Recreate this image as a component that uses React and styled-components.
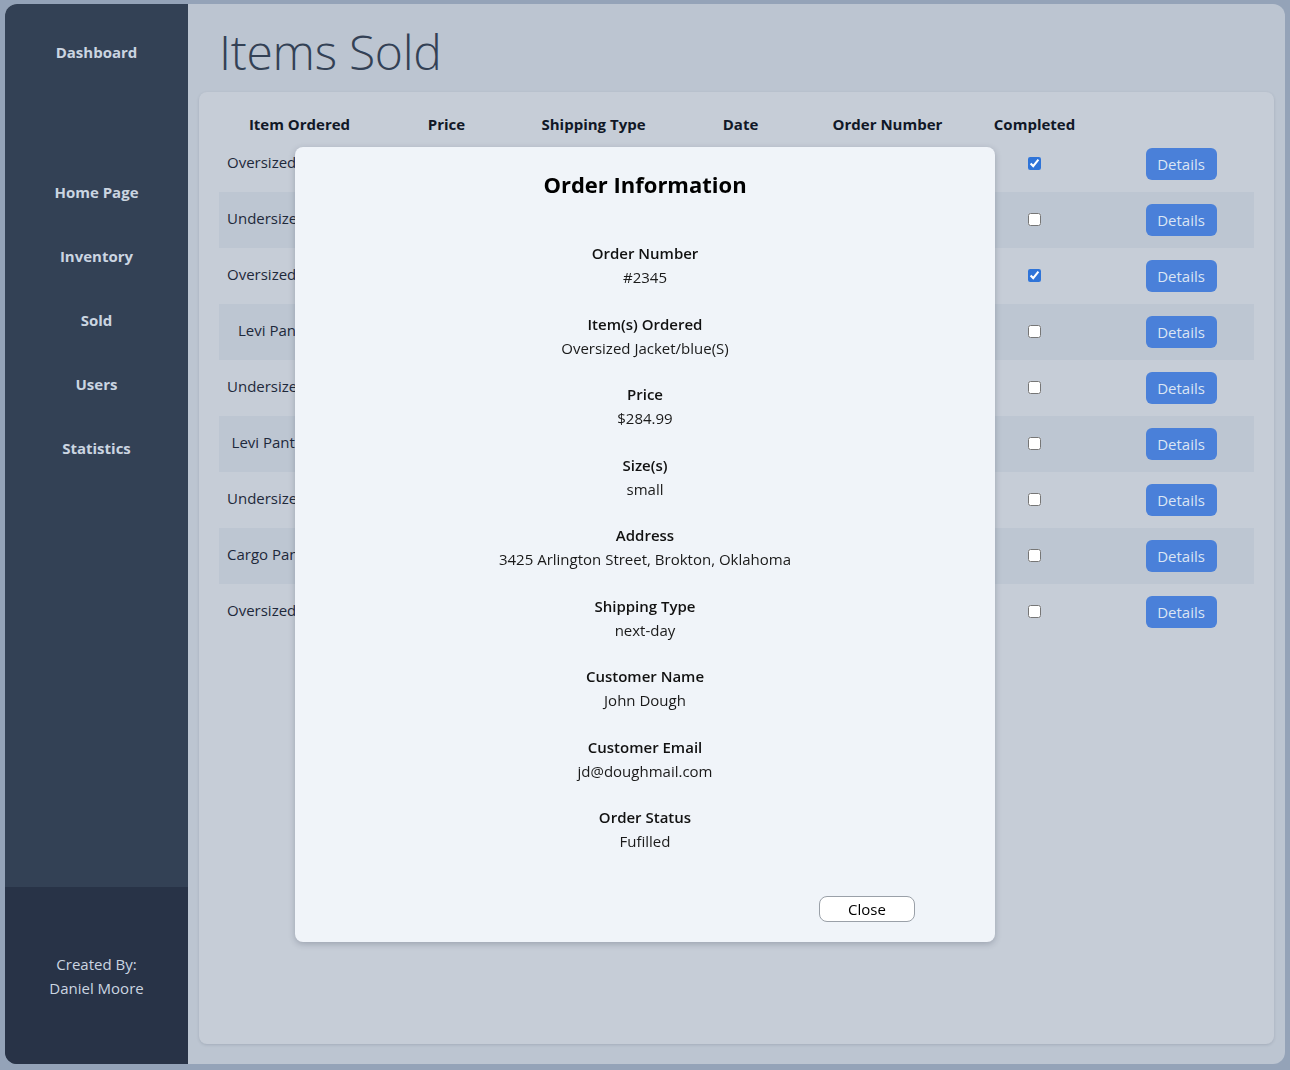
import React from "react";
import styled, { createGlobalStyle } from "styled-components";

const Global = createGlobalStyle`
  html, body { margin: 0; padding: 0; }
  body {
    background: #94a3b8;
    font-family: "Open Sans", "Noto Sans", sans-serif;
  }
  * { box-sizing: border-box; }
`;

const Shell = styled.div`
  margin: 4px 5px 6px 5px;
  height: 1060px;
  display: flex;
  border-radius: 12px;
  overflow: hidden;
  background: #bcc5d1;
`;

const Sidebar = styled.aside`
  width: 183px;
  display: flex;
  flex-direction: column;
  background: #334155;
  color: #cbd5e1;
`;

const Brand = styled.div`
  font-weight: 700;
  font-size: 15px;
  text-align: center;
  padding-top: 38px;
  height: 177px;
`;

const Nav = styled.nav`
  flex: 1;
  display: flex;
  flex-direction: column;
  gap: 42px;
`;

const NavItem = styled.a`
  font-weight: 700;
  font-size: 15px;
  text-align: center;
  line-height: 22px;
  color: #cbd5e1;
`;

const Footer = styled.div`
  height: 177px;
  background: #283347;
  display: flex;
  flex-direction: column;
  align-items: center;
  justify-content: center;
  font-size: 15px;
  line-height: 24px;
  color: #cbd5e1;
`;

const Main = styled.main`
  flex: 1;
  display: flex;
  flex-direction: column;
  padding: 0 11px 20px 11px;
`;

const Title = styled.h1`
  margin: 0;
  height: 88px;
  padding: 16px 0 0 20px;
  font-size: 48px;
  font-weight: 300;
  line-height: 64px;
  color: #334155;
  letter-spacing: -0.3px;
`;

const Card = styled.section`
  flex: 1;
  background: #c6cdd7;
  border-radius: 8px;
  padding: 20px 20px;
  box-shadow: 0 1px 3px rgba(30, 41, 59, 0.15);
`;

const Table = styled.table`
  width: 100%;
  border-collapse: collapse;
  table-layout: fixed;
  color: #1e293b;
  font-size: 15px;
`;

const Th = styled.th`
  width: ${(p) => p.$w || "auto"};
  height: 24px;
  padding: 0 0 0 ${(p) => p.$pl || "0px"};
  font-weight: 700;
  font-size: 15px;
  text-align: center;
  color: #111827;
`;

const Tr = styled.tr`
  height: 56px;
  background: ${(p) => (p.$striped ? "#bdc6d2" : "transparent")};
`;

const Td = styled.td`
  text-align: center;
  vertical-align: middle;
  padding: 0 8px ${(p) => (p.$raised ? "5px" : "0")} 8px;
  white-space: nowrap;
  overflow: hidden;
`;

const Check = styled.input`
  width: 13px;
  height: 13px;
  margin: 0;
  accent-color: #2f74d8;
  vertical-align: middle;
`;

const DetailsBtn = styled.button`
  width: 71px;
  height: 32px;
  border: none;
  border-radius: 6px;
  background: #4a80d9;
  color: #dbe5f4;
  font-family: inherit;
  font-size: 15px;
  vertical-align: middle;
`;

const Modal = styled.div`
  position: fixed;
  top: 147px;
  left: 295px;
  width: 700px;
  height: 795px;
  background: #f0f4f9;
  border-radius: 8px;
  box-shadow: 0 2px 6px rgba(30, 41, 59, 0.25);
  display: flex;
  flex-direction: column;
  align-items: center;
  color: #111;
`;

const ModalTitle = styled.h2`
  margin: 0;
  padding-top: 22px;
  font-size: 22px;
  font-weight: 700;
  line-height: 30px;
  color: #000;
`;

const Fields = styled.dl`
  margin: 0;
  padding-top: 42px;
  display: flex;
  flex-direction: column;
  align-items: center;
  gap: 22.5px;
  flex: 1;
`;

const Field = styled.div`
  text-align: center;
  line-height: 24px;
  font-size: 15px;
`;

const Label = styled.dt`
  font-weight: 600;
  color: #111;
`;

const Value = styled.dd`
  margin: 0;
  color: #1a1a1a;
`;

const ModalFooter = styled.div`
  align-self: stretch;
  display: flex;
  justify-content: flex-end;
  padding: 0 80px 20px 0;
`;

const CloseBtn = styled.button`
  width: 96px;
  height: 26px;
  background: #fff;
  border: 1px solid #9aa0a8;
  border-radius: 8px;
  font-family: inherit;
  font-size: 15px;
  color: #000;
  padding: 0;
`;

const rows = [
  ["Oversized Jacket/blue(S)", "$284.99", "next-day", "05/12/2023", "#2345", true],
  ["Undersized Hoodie/grey(M)", "$64.99", "standard", "05/14/2023", "#2346", false],
  ["Oversized Jacket/black(L)", "$142.49", "two-day", "05/15/2023", "#2347", true],
  ["Levi Pants/tan(S)", "$59.99", "standard", "05/16/2023", "#2348", false],
  ["Undersized Hoodie/red(S)", "$64.99", "next-day", "05/18/2023", "#2349", false],
  ["Levi Pants/blue(M)", "$59.99", "two-day", "05/19/2023", "#2350", false],
  ["Undersized Hoodie/grey(L)", "$64.99", "standard", "05/20/2023", "#2351", false],
  ["Cargo Pants/olive(M)", "$79.99", "standard", "05/21/2023", "#2352", false],
  ["Oversized Jacket/blue(M)", "$142.49", "next-day", "05/22/2023", "#2353", false],
];

const fields = [
  ["Order Number", "#2345"],
  ["Item(s) Ordered", "Oversized Jacket/blue(S)"],
  ["Price", "$284.99"],
  ["Size(s)", "small"],
  ["Address", "3425 Arlington Street, Brokton, Oklahoma"],
  ["Shipping Type", "next-day"],
  ["Customer Name", "John Dough"],
  ["Customer Email", "jd@doughmail.com"],
  ["Order Status", "Fufilled"],
];

export default function App() {
  return (
    <>
      <Global />
      <Shell>
        <Sidebar>
          <Brand>Dashboard</Brand>
          <Nav>
            {["Home Page", "Inventory", "Sold", "Users", "Statistics"].map((n) => (
              <NavItem key={n}>{n}</NavItem>
            ))}
          </Nav>
          <Footer>
            <div>Created By:</div>
            <div>Daniel Moore</div>
          </Footer>
        </Sidebar>
        <Main>
          <Title>Items Sold</Title>
          <Card>
            <Table>
              <thead>
                <tr>
                  <Th $w="154px" $pl="7px">Item Ordered</Th>
                  <Th $w="147px">Price</Th>
                  <Th $w="147px">Shipping Type</Th>
                  <Th $w="147px">Date</Th>
                  <Th $w="147px">Order Number</Th>
                  <Th $w="147px">Completed</Th>
                  <Th></Th>
                </tr>
              </thead>
              <tbody>
                {rows.map((r, i) => (
                  <Tr key={i} $striped={i % 2 === 1}>
                    <Td $raised>{r[0]}</Td>
                    <Td $raised>{r[1]}</Td>
                    <Td $raised>{r[2]}</Td>
                    <Td $raised>{r[3]}</Td>
                    <Td $raised>{r[4]}</Td>
                    <Td $raised>
                      <Check type="checkbox" defaultChecked={r[5]} />
                    </Td>
                    <Td>
                      <DetailsBtn>Details</DetailsBtn>
                    </Td>
                  </Tr>
                ))}
              </tbody>
            </Table>
          </Card>
        </Main>
      </Shell>
      <Modal>
        <ModalTitle>Order Information</ModalTitle>
        <Fields>
          {fields.map(([l, v]) => (
            <Field key={l}>
              <Label>{l}</Label>
              <Value>{v}</Value>
            </Field>
          ))}
        </Fields>
        <ModalFooter>
          <CloseBtn>Close</CloseBtn>
        </ModalFooter>
      </Modal>
    </>
  );
}
